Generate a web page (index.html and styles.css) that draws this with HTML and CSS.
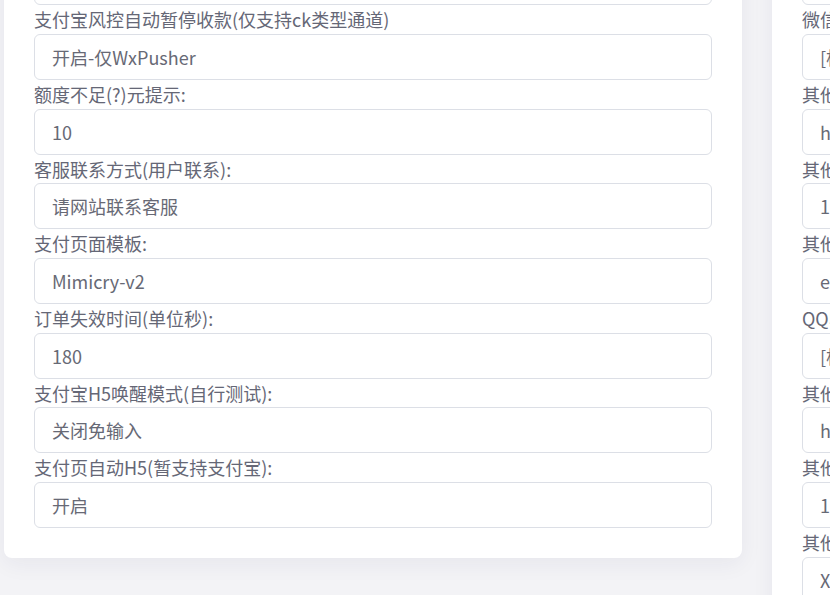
FILE: index.html
```html
<!DOCTYPE html>
<html lang="zh-CN">
<head>
<meta charset="utf-8">
<link rel="stylesheet" href="styles.css">
<title>设置</title>
</head>
<body>
<div class="page">
  <section class="card card-left">
    <div class="field"><div class="label">支付宝收款提醒:</div><div class="input">开启</div></div>
    <div class="field"><div class="label">支付宝风控自动暂停收款(仅支持ck类型通道)</div><div class="input">开启-仅WxPusher</div></div>
    <div class="field"><div class="label">额度不足(?)元提示:</div><div class="input">10</div></div>
    <div class="field"><div class="label">客服联系方式(用户联系):</div><div class="input">请网站联系客服</div></div>
    <div class="field"><div class="label">支付页面模板:</div><div class="input">Mimicry-v2</div></div>
    <div class="field"><div class="label">订单失效时间(单位秒):</div><div class="input">180</div></div>
    <div class="field"><div class="label">支付宝H5唤醒模式(自行测试):</div><div class="input">关闭免输入</div></div>
    <div class="field"><div class="label">支付页自动H5(暂支持支付宝):</div><div class="input">开启</div></div>
  </section>
  <section class="card card-right">
    <div class="field"><div class="label">其他支付宝收款名称:</div><div class="input">1</div></div>
    <div class="field"><div class="label">微信收款方式:</div><div class="input">[根据通道自动]</div></div>
    <div class="field"><div class="label">其他微信收款地址:</div><div class="input">https://example.com</div></div>
    <div class="field"><div class="label">其他微信收款金额:</div><div class="input">100</div></div>
    <div class="field"><div class="label">其他微信收款名称:</div><div class="input">example</div></div>
    <div class="field"><div class="label">QQ收款方式:</div><div class="input">[根据通道自动]</div></div>
    <div class="field"><div class="label">其他QQ收款地址:</div><div class="input">https://example.com</div></div>
    <div class="field"><div class="label">其他QQ收款金额:</div><div class="input">100</div></div>
    <div class="field"><div class="label">其他QQ收款名称:</div><div class="input">XXX</div></div>
  </section>
</div>
</body>
</html>
```
FILE: styles.css
```css
html, body {
  margin: 0;
  padding: 0;
  background: #f3f3f6;
  overflow: hidden;
  height: 595px;
}
body {
  font-family: "Noto Sans CJK SC", "Noto Sans", sans-serif;
  font-size: 18px;
  color: #676975;
}
.page {
  display: flex;
  align-items: flex-start;
  gap: 30px;
  padding-left: 4px;
  margin-top: -99.3px;
}
.card {
  flex: 0 0 738px;
  box-sizing: border-box;
  background: #ffffff;
  border-radius: 8px;
  padding: 30px;
  box-shadow: 0 6px 22px rgba(40, 40, 80, 0.06);
}
.card-right {
  min-height: 800px;
}
.field {
  display: flex;
  flex-direction: column;
}
.label {
  height: 28.67px;
  line-height: 28.67px;
  color: #656776;
  white-space: nowrap;
}
.input {
  box-sizing: border-box;
  height: 46px;
  line-height: 44px;
  border: 1px solid #dcdfe6;
  border-radius: 6px;
  padding: 0 17px;
  color: #676975;
  white-space: nowrap;
  overflow: hidden;
}
```
